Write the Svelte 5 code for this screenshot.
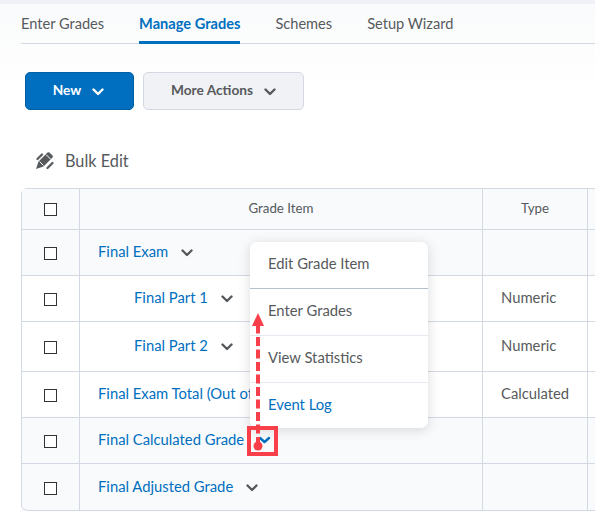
<script>
  const tabs = ['Enter Grades', 'Manage Grades', 'Schemes', 'Setup Wizard'];
  const rows = [
    { name: 'Final Exam', type: '', shaded: true, h: 46 },
    { name: 'Final Part 1', type: 'Numeric', indent: true, h: 46 },
    { name: 'Final Part 2', type: 'Numeric', indent: true, h: 50 },
    { name: 'Final Exam Total (Out of 100)', type: 'Calculated', noChevron: true, clip: true, h: 46 },
    { name: 'Final Calculated Grade', type: '', shaded: true, noChevron: true, h: 46 },
    { name: 'Final Adjusted Grade', type: '', shaded: true, h: 47 }
  ];
  const menu = ['Edit Grade Item', 'Enter Grades', 'View Statistics', 'Event Log'];
</script>

{#snippet chevron(color)}
  <svg class="chev" width="12" height="8" viewBox="0 0 12 8">
    <path d="M1.5 1.5 L6 6 L10.5 1.5" fill="none" stroke={color} stroke-width="2.4" stroke-linecap="round" stroke-linejoin="round" />
  </svg>
{/snippet}

<div class="page">
  <nav class="tabs">
    {#each tabs as tab, i}
      <span class="tab" class:active={i === 1}>{tab}</span>
    {/each}
  </nav>

  <div class="actions">
    <button class="btn primary">New {@render chevron('#fff')}</button>
    <button class="btn">More Actions {@render chevron('#565a5c')}</button>
  </div>

  <div class="bulk">
    <svg width="19" height="19" viewBox="0 0 19 19">
      <path d="M1 18 L3.500 10.500 L12.500 1.500 Q13.500 0.800 14.500 1.500 L17.500 4.500 Q18.200 5.500 17.500 6.500 L8.500 15.500 Z" fill="#565a5c" />
      <path d="M4.500 10.500 L8.500 14.500 M11 3.500 L15.500 8" stroke="#fff" stroke-width="1" />
      <path d="M2.500 8 L7 3.500 M12.500 17 L17.500 12" stroke="#565a5c" stroke-width="2.200" stroke-linecap="round" />
    </svg>
    <span>Bulk Edit</span>
  </div>

  <table>
    <colgroup>
      <col class="c-check" /><col class="c-name" /><col class="c-type" /><col class="c-rest" />
    </colgroup>
    <thead>
      <tr>
        <th><span class="box"></span></th>
        <th>Grade Item</th>
        <th>Type</th>
        <th></th>
      </tr>
    </thead>
    <tbody>
      {#each rows as row}
        <tr class:shaded={row.shaded} style="height: {row.h}px">
          <td class="center"><span class="box"></span></td>
          <td class="name" class:indent={row.indent}>
            <span class="link" class:clip={row.clip}>{row.name}</span>
            {#if !row.noChevron}{@render chevron('#565a5c')}{/if}
          </td>
          <td class="type">{row.type}</td>
          <td></td>
        </tr>
      {/each}
    </tbody>
  </table>

  <ul class="menu">
    {#each menu as item, i}
      <li class:first={i === 0} class:link={i === 3}>{item}</li>
    {/each}
  </ul>

  <svg class="callout" width="595" height="517" viewBox="0 0 595 517">
    <path d="M260 438 L264.500 442 L269 438" fill="none" stroke="#006fbf" stroke-width="2.400" stroke-linecap="round" stroke-linejoin="round" />
    <rect x="249" y="428" width="27" height="26" fill="none" stroke="#f9404a" stroke-width="4" />
    <path d="M258 446 V324" stroke="#f9404a" stroke-width="4" stroke-dasharray="9 3.500" />
    <path d="M252 326 L258 313 L264 326 Z" fill="#f9404a" />
    <circle cx="258" cy="446" r="4.500" fill="#f9404a" />
  </svg>
</div>

<style>
  :global(body) {
    margin: 0;
    overflow: hidden;
  }
  .page {
    position: relative;
    width: 595px;
    height: 517px;
    overflow: hidden;
    box-sizing: border-box;
    padding-top: 4px;
    font-family: Lato, "Open Sans", sans-serif;
    color: #565a5c;
    background: linear-gradient(#f9fafb, #fff 90px);
  }
  .page::before {
    content: '';
    position: absolute;
    inset: 0 0 auto 0;
    height: 4px;
    background: #eff1f6;
  }
  .tabs {
    display: flex;
    gap: 35px;
    margin-left: 21px;
    height: 40px;
    box-sizing: border-box;
    border-bottom: 1px solid #d3d9e3;
  }
  .tab {
    height: 40px;
    box-sizing: border-box;
    padding-top: 11px;
    font-size: 14.600px;
    line-height: 18px;
  }
  .tab.active {
    color: #006fbf;
    font-weight: 700;
    border-bottom: 3px solid #006fbf;
  }
  .actions {
    display: flex;
    gap: 9px;
    margin: 28px 0 0 25px;
  }
  .btn {
    display: flex;
    align-items: center;
    justify-content: center;
    gap: 11px;
    width: 161px;
    height: 38px;
    padding: 0 0 3px;
    border: 1px solid #d3d9e3;
    border-radius: 5px;
    background: #f1f2f5;
    color: #565a5c;
    font: 700 13.700px Lato, sans-serif;
  }
  .btn.primary {
    width: 109px;
    padding-right: 2px;
    background: #006fbf;
    border-color: #005fa3;
    color: #fff;
  }
  .btn .chev {
    margin-top: 4px;
  }
  .chev {
    display: inline-block;
    vertical-align: middle;
  }
  .bulk {
    display: flex;
    align-items: center;
    gap: 11px;
    margin: 40px 0 0 35px;
    height: 20px;
    font-size: 16.300px;
  }
  table {
    position: absolute;
    left: 21px;
    top: 188px;
    width: 640px;
    table-layout: fixed;
    border-collapse: separate;
    border-spacing: 0;
    font-size: 14.800px;
    border-left: 1px solid #d3d9e3;
    border-top: 1px solid #d3d9e3;
    border-radius: 6px 0 0 6px;
    background: #fff;
  }
  .c-check { width: 58px; }
  .c-name { width: 403px; }
  .c-type { width: 105px; }
  th, td {
    padding: 0 0 2px;
    border-right: 1px solid #d3d9e3;
    border-bottom: 1px solid #d3d9e3;
    box-sizing: border-box;
  }
  th {
    height: 41px;
    background: #f9fafc;
    font-size: 13.300px;
    font-weight: 400;
    text-align: center;
  }
  tr.shaded td {
    background: #f9fafc;
  }
  tbody tr:last-child td:first-child {
    border-bottom-left-radius: 6px;
  }
  .box {
    display: inline-block;
    width: 11px;
    height: 11px;
    border: 1px solid #333;
    background: #fff;
    vertical-align: middle;
    box-sizing: content-box;
  }
  .center {
    text-align: center;
  }
  td.name {
    padding: 0 0 3px 18px;
    white-space: nowrap;
    overflow: hidden;
  }
  td.name.indent {
    padding-left: 54px;
  }
  .name .chev {
    margin-left: 9px;
  }
  .link {
    color: #006fbf;
  }
  /* the popup menu sits over the end of this name */
  .clip {
    display: block;
    width: 152px;
    overflow: hidden;
  }
  td.type {
    padding: 0 0 3px 18px;
  }
  .menu {
    position: absolute;
    left: 250px;
    top: 242px;
    width: 178px;
    height: 186px;
    margin: 0;
    padding: 0;
    list-style: none;
    background: #fff;
    border-radius: 7px;
    box-shadow: 0 2px 12px rgba(86, 90, 92, 0.22);
    font-size: 14.800px;
  }
  .menu li {
    display: flex;
    align-items: center;
    box-sizing: border-box;
    height: 47px;
    padding: 0 0 4px 18px;
    border-bottom: 1px solid #e6eaf0;
  }
  .menu li.first {
    border-bottom-color: #b4bfcd;
  }
  .menu li:last-child {
    border-bottom: 0;
    height: 45px;
    padding-bottom: 3px;
  }
  .callout {
    position: absolute;
    inset: 0;
    pointer-events: none;
  }
</style>
